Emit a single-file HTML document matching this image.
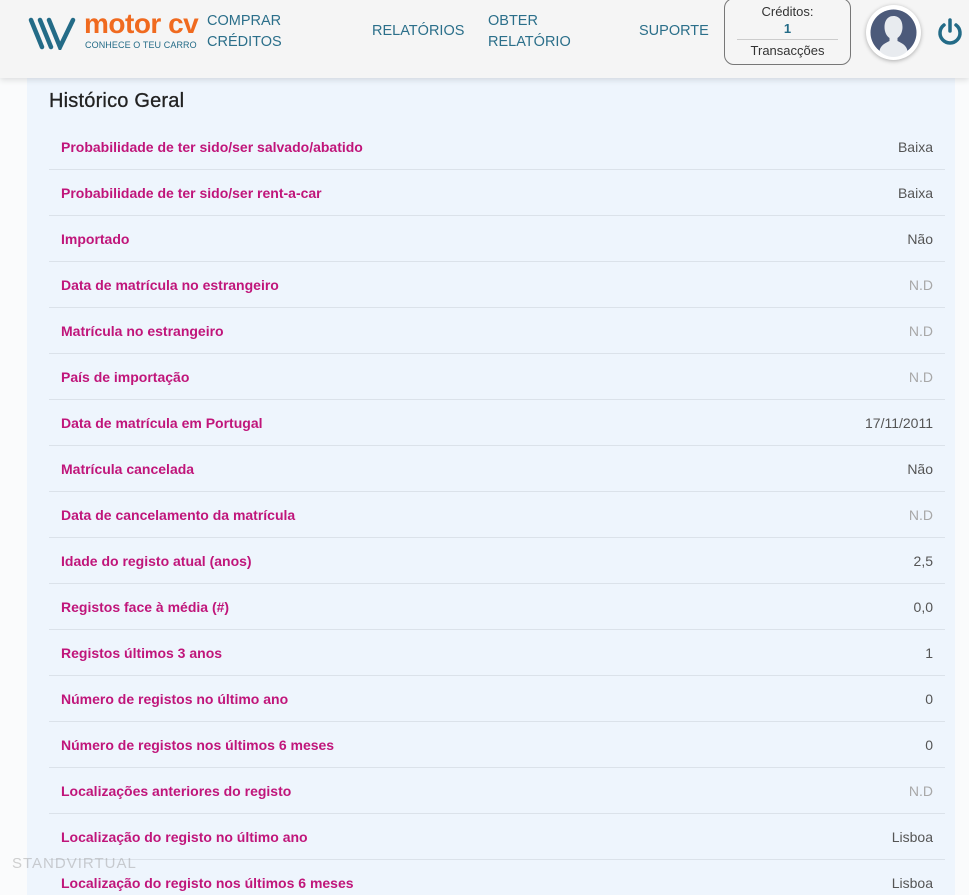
<!DOCTYPE html>
<html><head><meta charset="utf-8"><style>
*{margin:0;padding:0;box-sizing:border-box}
html,body{width:969px;height:895px;overflow:hidden}
body{background:#fafbfc;font-family:"Liberation Sans",Arial,sans-serif;position:relative}
.hdr{position:absolute;left:0;top:0;width:969px;height:78px;background:#f5f5f5;box-shadow:0 2px 6px rgba(0,0,0,.12);z-index:2}
.nav{position:absolute;color:#2b6f8a;font-size:14.5px;line-height:21px;letter-spacing:0}
.panel{position:absolute;left:27px;top:78px;width:928px;height:817px;background:#eef5fd}
h2{position:absolute;left:49px;top:90px;font-size:20px;font-weight:normal;color:#222;letter-spacing:.2px;-webkit-text-stroke:.3px #222}
.rows{position:absolute;left:49px;top:124px;width:896px}
.r{height:46px;border-bottom:1px solid #dbe2ea;display:flex;align-items:center;justify-content:space-between;padding:0 12px}
.l{color:#c0157a;font-weight:bold;font-size:14px}
.v{color:#555;font-size:14px}
.nd{color:#a8a8a8}
</style></head><body>
<div class="hdr">
<svg style="position:absolute;left:28px;top:16px" width="50" height="34" viewBox="0 0 50 34"><g stroke="#236b87" stroke-width="4.5" stroke-linecap="round" fill="none"><path d="M3 4 L14 31"/><path d="M12 4 L23 31"/><path d="M21 4 L32 31 L45 4"/></g></svg>
<div style="position:absolute;left:84px;top:8px;color:#f06a1f;font-size:28px;font-weight:bold;letter-spacing:-.5px">motor cv</div>
<div style="position:absolute;left:85px;top:40px;color:#236b87;font-size:9px;letter-spacing:.1px">CONHECE O TEU CARRO</div>
<div class="nav" style="left:207px;top:11px">COMPRAR<br>CRÉDITOS</div>
<div class="nav" style="left:372px;top:21px">RELATÓRIOS</div>
<div class="nav" style="left:488px;top:11px">OBTER<br>RELATÓRIO</div>
<div class="nav" style="left:639px;top:21px">SUPORTE</div>
<div style="position:absolute;left:724px;top:-2px;width:127px;height:67px;border:1px solid #777;border-radius:10px;text-align:center;font-size:13px;color:#333">
<div style="margin-top:5px">Créditos:</div><div style="font-weight:bold;color:#236b87;margin-top:2px">1</div>
<div style="border-top:1px solid #ccc;margin:3px 12px 0;padding-top:3px">Transacções</div></div>
<div style="position:absolute;left:866px;top:5px;width:55px;height:55px;border-radius:50%;background:#fff;box-shadow:0 1px 4px rgba(0,0,0,.3)"><svg width="55" height="55" viewBox="0 0 55 55"><circle cx="27.5" cy="27.5" r="23" fill="#4c5a7a"/><path d="M27.5 11c-6 0-9 5-9 11 0 5 2 9 5 11v3c-4 2-9 4-10 10 4 4 9 6 14 6s10-2 14-6c-1-6-6-8-10-10v-3c3-2 5-6 5-11 0-6-3-11-9-11z" fill="#e8ebef"/></svg></div>
<svg style="position:absolute;left:936px;top:17px" width="28" height="30" viewBox="0 0 28 30"><g stroke="#236b87" stroke-width="3.5" fill="none" stroke-linecap="round"><path d="M14 3v11"/><path d="M8 8a10 10 0 1 0 12 0"/></g></svg>
</div>
<div class="panel"></div>
<h2>Histórico Geral</h2>
<div class="rows">
<div class="r"><span class="l">Probabilidade de ter sido/ser salvado/abatido</span><span class="v">Baixa</span></div>
<div class="r"><span class="l">Probabilidade de ter sido/ser rent-a-car</span><span class="v">Baixa</span></div>
<div class="r"><span class="l">Importado</span><span class="v">Não</span></div>
<div class="r"><span class="l">Data de matrícula no estrangeiro</span><span class="v nd">N.D</span></div>
<div class="r"><span class="l">Matrícula no estrangeiro</span><span class="v nd">N.D</span></div>
<div class="r"><span class="l">País de importação</span><span class="v nd">N.D</span></div>
<div class="r"><span class="l">Data de matrícula em Portugal</span><span class="v">17/11/2011</span></div>
<div class="r"><span class="l">Matrícula cancelada</span><span class="v">Não</span></div>
<div class="r"><span class="l">Data de cancelamento da matrícula</span><span class="v nd">N.D</span></div>
<div class="r"><span class="l">Idade do registo atual (anos)</span><span class="v">2,5</span></div>
<div class="r"><span class="l">Registos face à média (#)</span><span class="v">0,0</span></div>
<div class="r"><span class="l">Registos últimos 3 anos</span><span class="v">1</span></div>
<div class="r"><span class="l">Número de registos no último ano</span><span class="v">0</span></div>
<div class="r"><span class="l">Número de registos nos últimos 6 meses</span><span class="v">0</span></div>
<div class="r"><span class="l">Localizações anteriores do registo</span><span class="v nd">N.D</span></div>
<div class="r"><span class="l">Localização do registo no último ano</span><span class="v">Lisboa</span></div>
<div class="r"><span class="l">Localização do registo nos últimos 6 meses</span><span class="v">Lisboa</span></div>
</div>
<div style="position:absolute;left:12px;top:855px;color:rgba(150,150,150,.45);font-size:15px;letter-spacing:1px">STANDVIRTUAL</div>
</body></html>
